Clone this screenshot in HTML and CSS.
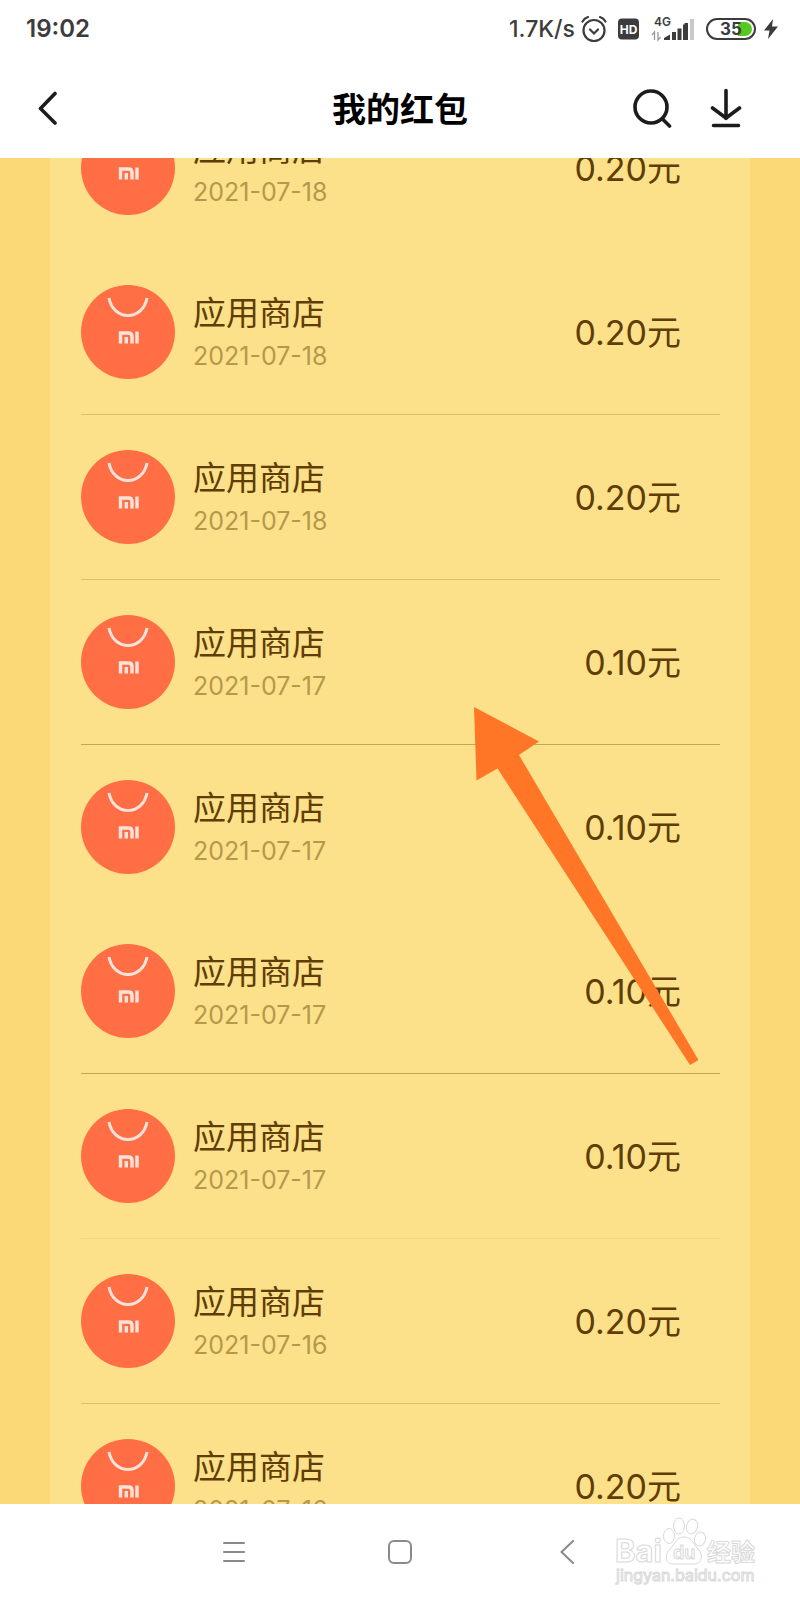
FILE: index.html
```html
<!DOCTYPE html>
<html lang="zh-CN">
<head>
<meta charset="UTF-8">
<meta name="viewport" content="width=device-width, initial-scale=1.0">
<title>我的红包</title>
<link rel="stylesheet" href="styles.css">
</head>
<body>

<!-- shared app icon -->
<svg class="defs" width="0" height="0" aria-hidden="true">
    <symbol id="store" viewBox="0 0 94 94">
        <circle cx="47" cy="47" r="47" fill="#ff6e45"/>
        <path d="M28 13c2 11 10 17.500 19 17.500S64 24 66 13" fill="none" stroke="#ffe3da" stroke-width="3"/>
        <path d="M39.500 58.500V48h8q3.500 0 3.500 3.500v7M45.300 58.500v-6.500M56 46.500v12" fill="none" stroke="#ffe3da" stroke-width="3.400"/>
    </symbol>
</svg>

<div class="status-bar">
    <span class="time">19:02</span>
    <div class="status-icons">
        <span class="speed">1.7K/s</span>
        <svg width="26" height="28" viewBox="0 0 26 28" fill="none" stroke="#3c3c3c" stroke-width="2.200" stroke-linecap="round">
            <circle cx="13" cy="15.500" r="10.500"/>
            <path d="M9 14.500l4 4 4-4M1.500 6.500Q3.500 3 7 2M24.500 6.500Q22.500 3 19 2"/>
        </svg>
        <svg class="hd" width="21" height="22" viewBox="0 0 21 22">
            <rect y="0.500" width="21" height="21" rx="4" fill="#3c3c3c"/>
            <text x="10.500" y="15.500" text-anchor="middle" class="hd-text">HD</text>
        </svg>
        <svg class="signal" width="43" height="26" viewBox="0 0 43 26">
            <text x="3" y="10" class="net-text">4G</text>
            <path d="M3.500 24v-8l-2.500 3M7 16v8l2.500-3" fill="none" stroke="#999" stroke-width="1.300"/>
            <path d="M13 24v-2l6-3.500V24zM21 16h4v8h-4zM26.500 12.500h4V24h-4zM32 8.500h3.500V24H32zM33.500 7H37v17h-3.500z" fill="#3c3c3c"/>
            <path d="M39 3h4v21h-4z" fill="#c8c8c8"/>
        </svg>
        <svg class="battery" width="50" height="24" viewBox="0 0 50 24">
            <rect x="1" y="2" width="48" height="20" rx="10" fill="#fff" stroke="#3c3c3c" stroke-width="2"/>
            <path d="M32 5h7a7 7 0 0 1 0 14h-7z" fill="#57c822"/>
            <text x="25" y="18" text-anchor="middle" class="battery-text">35</text>
        </svg>
        <svg class="bolt" width="14" height="22" viewBox="0 0 14 22">
            <path d="M9 1L0 12.500h5.500L4 21l10-12.500H8z" fill="#3c3c3c"/>
        </svg>
    </div>
</div>

<header class="title-bar">
    <button type="button" class="icon-btn" aria-label="返回">
        <svg width="20" height="36" viewBox="0 0 20 36" fill="none" stroke="#1c1c1c" stroke-width="3.600" stroke-linecap="round" stroke-linejoin="round">
            <path d="M17 3.500L2.500 18.500 17 33"/>
        </svg>
    </button>
    <h1>我的红包</h1>
    <div class="actions">
        <button type="button" class="icon-btn" aria-label="搜索">
            <svg width="40" height="40" viewBox="0 0 40 40" fill="none" stroke="#1c1c1c" stroke-width="3.600" stroke-linecap="round">
                <circle cx="19" cy="19" r="16"/>
                <path d="M30.500 31l7 7"/>
            </svg>
        </button>
        <button type="button" class="icon-btn" aria-label="下载">
            <svg width="32" height="40" viewBox="0 0 32 40" fill="none" stroke="#1c1c1c" stroke-width="3.600" stroke-linecap="round" stroke-linejoin="round">
                <path d="M16 2.500v28M2.500 20L16 30l13.500-10M3.500 37.500h25"/>
            </svg>
        </button>
    </div>
</header>

<main class="content">
    <ul class="list">
        <li class="item no-line">
            <svg class="logo"><use href="#store"/></svg>
            <div class="info"><p class="name">应用商店</p><p class="date">2021-07-18</p></div>
            <span class="amount">0.20元</span>
        </li>
        <li class="item">
            <svg class="logo"><use href="#store"/></svg>
            <div class="info"><p class="name">应用商店</p><p class="date">2021-07-18</p></div>
            <span class="amount">0.20元</span>
        </li>
        <li class="item">
            <svg class="logo"><use href="#store"/></svg>
            <div class="info"><p class="name">应用商店</p><p class="date">2021-07-18</p></div>
            <span class="amount">0.20元</span>
        </li>
        <li class="item dark-line">
            <svg class="logo"><use href="#store"/></svg>
            <div class="info"><p class="name">应用商店</p><p class="date">2021-07-17</p></div>
            <span class="amount">0.10元</span>
        </li>
        <li class="item no-line">
            <svg class="logo"><use href="#store"/></svg>
            <div class="info"><p class="name">应用商店</p><p class="date">2021-07-17</p></div>
            <span class="amount">0.10元</span>
        </li>
        <li class="item dark-line">
            <svg class="logo"><use href="#store"/></svg>
            <div class="info"><p class="name">应用商店</p><p class="date">2021-07-17</p></div>
            <span class="amount">0.10元</span>
        </li>
        <li class="item light-line">
            <svg class="logo"><use href="#store"/></svg>
            <div class="info"><p class="name">应用商店</p><p class="date">2021-07-17</p></div>
            <span class="amount">0.10元</span>
        </li>
        <li class="item">
            <svg class="logo"><use href="#store"/></svg>
            <div class="info"><p class="name">应用商店</p><p class="date">2021-07-16</p></div>
            <span class="amount">0.20元</span>
        </li>
        <li class="item no-line">
            <svg class="logo"><use href="#store"/></svg>
            <div class="info"><p class="name">应用商店</p><p class="date">2021-07-16</p></div>
            <span class="amount">0.20元</span>
        </li>
    </ul>
    <svg class="arrow" width="226" height="360" viewBox="0 0 226 360" aria-hidden="true">
        <path d="M0 0L65 34.500 45 48 224.500 353 216 358 23.500 61.500 2.500 73.500z" fill="#ff7627"/>
    </svg>
</main>

<nav class="nav-bar">
    <button type="button" class="icon-btn" aria-label="菜单">
        <svg width="24" height="24" viewBox="0 0 24 24" stroke="#8a8a8a" stroke-width="2" stroke-linecap="round">
            <path d="M2 3h20M2 12h20M2 21h20"/>
        </svg>
    </button>
    <button type="button" class="icon-btn" aria-label="主页">
        <svg width="24" height="24" viewBox="0 0 24 24" fill="none" stroke="#8a8a8a" stroke-width="2">
            <rect x="1" y="1" width="22" height="22" rx="5"/>
        </svg>
    </button>
    <button type="button" class="icon-btn" aria-label="返回">
        <svg width="24" height="24" viewBox="0 0 24 24" fill="none" stroke="#8a8a8a" stroke-width="2" stroke-linecap="round">
            <path d="M19 1L7.500 12 19 23"/>
        </svg>
    </button>
    <svg class="watermark" width="146" height="70" viewBox="0 0 146 70">
        <g fill="#fff" stroke="#d9d9d9" stroke-width="1">
            <ellipse cx="55" cy="20" rx="5.500" ry="7.500"/>
            <ellipse cx="65" cy="10" rx="5.500" ry="8"/>
            <ellipse cx="78" cy="10.500" rx="5.500" ry="7.500" transform="rotate(12 78 10.500)"/>
            <ellipse cx="86" cy="23" rx="5.500" ry="7" transform="rotate(15 86 23)"/>
            <path d="M70 21c8 0 9 7 14 12 5 5 5 15-4 15H60c-10 0-9-10-4-15s6-12 14-12z"/>
        </g>
        <text x="1" y="46" class="wm-big">Bai</text>
        <text x="59" y="43" class="wm-du">du</text>
        <text x="93" y="45" class="wm-cn">经验</text>
        <text x="2" y="65" class="wm-url">jingyan.baidu.com</text>
    </svg>
</nav>

</body>
</html>
```
FILE: styles.css
```css
* {
    box-sizing: border-box;
}
body {
    display: flex;
    flex-direction: column;
    height: 100vh;
    margin: 0;
    background-color: #fff;
    font-family: Inter, "Noto Sans CJK SC", sans-serif;
}
svg {
    display: block;
    flex: none;
}
.defs {
    position: absolute;
}
.icon-btn {
    padding: 0;
    border: none;
    background: none;
    cursor: pointer;
}

/* status bar */
.status-bar {
    display: flex;
    flex: none;
    justify-content: space-between;
    align-items: center;
    height: 57px;
    padding: 0 22px 0 26px;
    color: #3c3c3c;
}
.time {
    font-size: 24px;
    font-weight: 600;
}
.status-icons {
    display: flex;
    align-items: center;
}
.speed {
    margin-right: 6px;
    font-size: 23px;
    font-weight: 500;
}
.hd {
    margin-left: 11px;
}
.signal, .battery {
    margin-left: 12px;
}
.bolt {
    margin-left: 8px;
}
.hd-text {
    font-size: 12px;
    font-weight: 700;
    fill: #fff;
}
.net-text {
    font-size: 12px;
    font-weight: 600;
    fill: #3c3c3c;
}
.battery-text {
    font-size: 17px;
    font-weight: 700;
    fill: #3c3c3c;
}

/* title bar */
.title-bar {
    display: grid;
    flex: none;
    grid-template-columns: 1fr auto 1fr;
    align-items: center;
    height: 101px;
    padding: 0 58px 0 38px;
}
.title-bar .icon-btn {
    justify-self: start;
}
h1 {
    margin: 0 0 0 20px;
    font-size: 34px;
    font-weight: 600;
    color: #000;
}
.actions {
    display: flex;
    justify-content: flex-end;
    gap: 38px;
}

/* records */
.content {
    position: relative;
    flex: 1;
    min-height: 0;
    overflow: hidden;
    padding: 0 50px;
    background-color: #fcd977;
}
.list {
    margin: -72px 0 0;
    padding: 0 30px 0 31px;
    background-color: #fde18a;
    list-style: none;
}
.item {
    display: flex;
    align-items: center;
    gap: 18px;
    height: 165px;
    padding-right: 39px;
    border-bottom: 1px solid #dcc070;
}
.no-line {
    height: 164px;
    border-bottom: none;
}
.dark-line {
    border-bottom-color: #c3a556;
}
.light-line {
    border-bottom-color: #f3d680;
}
.logo {
    width: 94px;
    height: 94px;
}
.info {
    flex: 1;
    padding-top: 2px;
}
.name, .date {
    margin: 0;
}
.name {
    font-size: 33px;
    line-height: 46px;
    color: #603d05;
}
.date {
    font-size: 25px;
    line-height: 40px;
    color: #b6984c;
}
.amount {
    padding-top: 2px;
    font-size: 34px;
    line-height: 46px;
    color: #603d05;
}
.arrow {
    position: absolute;
    top: 549px;
    left: 474px;
}

/* bottom navigation */
.nav-bar {
    position: relative;
    display: flex;
    flex: none;
    justify-content: center;
    align-items: center;
    gap: 142px;
    height: 96px;
}
.watermark {
    position: absolute;
    top: 12px;
    right: 40px;
    overflow: visible;
}
.wm-big, .wm-du, .wm-cn, .wm-url {
    fill: #fff;
    stroke: #d9d9d9;
    stroke-width: 1px;
}
.wm-big {
    font-size: 31px;
    font-weight: 700;
}
.wm-du {
    font-size: 18px;
    font-weight: 600;
}
.wm-cn {
    font-size: 24px;
    font-weight: 700;
}
.wm-url {
    font-size: 16px;
}
```
